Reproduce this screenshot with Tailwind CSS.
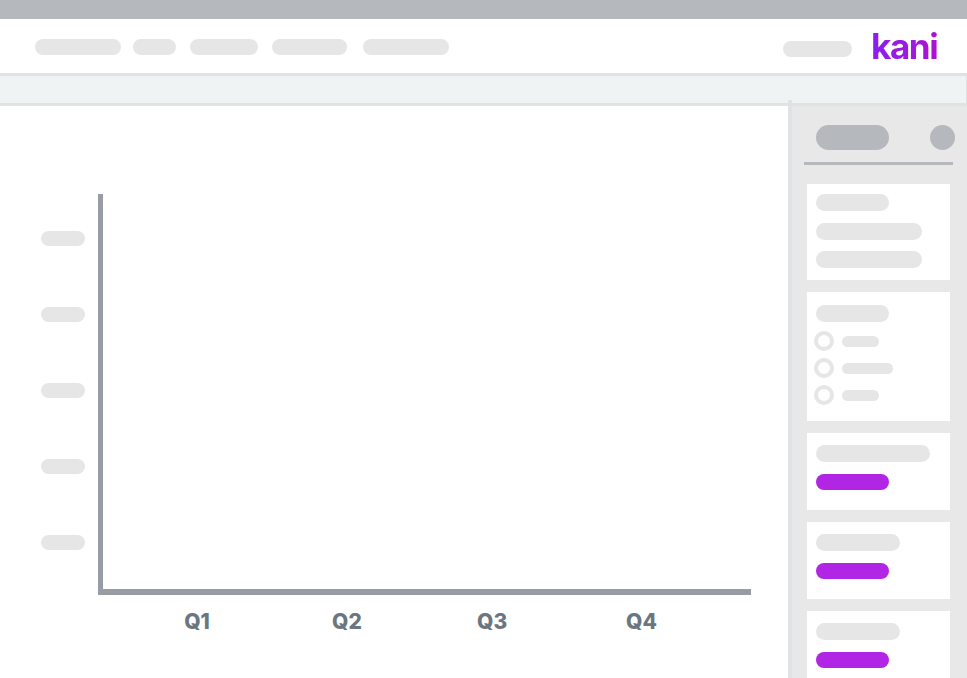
<!DOCTYPE html>
<html lang="en">
<head>
    <meta charset="UTF-8">
    <meta name="viewport" content="width=device-width, initial-scale=1.0">
    <title>Kani report placeholder</title>
    <script src="https://cdn.jsdelivr.net/npm/@tailwindcss/browser@4"></script>
</head>
<body class="bg-white">
<div class="relative flex flex-col w-[967px] h-[678px] overflow-hidden font-['Inter',sans-serif]">

    <!-- Window bar -->
    <div class="h-[19px] shrink-0 bg-[#b5b8bd]"></div>

    <!-- Nav -->
    <div class="h-[54px] shrink-0 flex items-center pl-[35px] pr-[29px] bg-white">
        <div class="flex gap-[14px] mt-[2px]">
            <div class="w-[86px] h-4 rounded-full bg-[#e6e6e6]"></div>
            <div class="w-[43px] h-4 rounded-full bg-[#e6e6e6] -ml-[2px]"></div>
            <div class="w-[68px] h-4 rounded-full bg-[#e6e6e6]"></div>
            <div class="w-[75px] h-4 rounded-full bg-[#e6e6e6]"></div>
            <div class="w-[86px] h-4 rounded-full bg-[#e6e6e6] ml-[2px]"></div>
        </div>
        <div class="ml-auto w-[69px] h-4 rounded-full bg-[#e6e6e6] mt-[6px]"></div>
        <div class="ml-[19px] w-[67px] text-[35px] leading-[36px] font-bold tracking-[-1.4px] bg-gradient-to-r from-[#8a1df2] to-[#ad0fd0] bg-clip-text text-transparent">kani</div>
    </div>

    <!-- Toolbar strip -->
    <div class="h-[33px] shrink-0 bg-[#f0f3f4] border-y-[3px] border-r border-[#dfe3e6]"></div>

    <div class="flex flex-1 min-h-0">
        <!-- Chart -->
        <div class="w-[788px] shrink-0 pt-[88px] pl-[41px]">
            <div class="flex">
                <div class="w-[44px] flex flex-col gap-[61px] pt-[37px]">
                    <div class="h-[15px] rounded-full bg-[#e6e6e6]"></div>
                    <div class="h-[15px] rounded-full bg-[#e6e6e6]"></div>
                    <div class="h-[15px] rounded-full bg-[#e6e6e6]"></div>
                    <div class="h-[15px] rounded-full bg-[#e6e6e6]"></div>
                    <div class="h-[15px] rounded-full bg-[#e6e6e6]"></div>
                </div>
                <div class="ml-[13px] w-[653px] h-[401px] border-l-[5px] border-b-[6px] border-[#989da5]"></div>
            </div>
            <div class="flex mt-[14px] text-[21px] leading-[26px] font-extrabold text-[#6b7680] text-center">
                <span class="w-[30px] ml-[141px]">Q1</span>
                <span class="w-[30px] ml-[120px]">Q2</span>
                <span class="w-[30px] ml-[115px]">Q3</span>
                <span class="w-[30px] ml-[119px]">Q4</span>
            </div>
        </div>

        <!-- Sidebar -->
        <div class="relative flex-1 min-w-0 bg-[#e8e8e8] border-l-4 border-[#dfe3e6]">
            <div class="absolute -left-1 -top-[6px] w-1 h-[6px] bg-[#dfe3e6]"></div>

            <div class="flex items-center justify-between pl-6 pr-3 pt-[19px]">
                <div class="w-[73px] h-[25px] rounded-full bg-[#b5b8bd]"></div>
                <div class="w-[25px] h-[25px] rounded-full bg-[#b5b8bd]"></div>
            </div>
            <div class="ml-3 mr-[14px] mt-3 h-[3px] bg-[#b5b8bd]"></div>

            <div class="flex flex-col gap-3 mt-[19px] ml-[15px] mr-[17px]">
                <div class="h-[96px] bg-white px-[9px] pt-[10px]">
                    <div class="w-[73px] h-[17px] rounded-full bg-[#e6e6e6]"></div>
                    <div class="w-[106px] h-[17px] mt-3 rounded-full bg-[#e6e6e6]"></div>
                    <div class="w-[106px] h-[17px] mt-[11px] rounded-full bg-[#e6e6e6]"></div>
                </div>

                <div class="h-[129px] bg-white px-[9px] pt-[13px]">
                    <div class="w-[73px] h-[17px] rounded-full bg-[#e6e6e6]"></div>
                    <div class="flex flex-col gap-[7px] mt-[9px] -ml-[2px]">
                        <div class="flex items-center gap-2">
                            <div class="w-5 h-5 rounded-full border-4 border-[#e6e6e6]"></div>
                            <div class="w-[37px] h-[11px] rounded-full bg-[#e6e6e6]"></div>
                        </div>
                        <div class="flex items-center gap-2">
                            <div class="w-5 h-5 rounded-full border-4 border-[#e6e6e6]"></div>
                            <div class="w-[51px] h-[11px] rounded-full bg-[#e6e6e6]"></div>
                        </div>
                        <div class="flex items-center gap-2">
                            <div class="w-5 h-5 rounded-full border-4 border-[#e6e6e6]"></div>
                            <div class="w-[37px] h-[11px] rounded-full bg-[#e6e6e6]"></div>
                        </div>
                    </div>
                </div>

                <div class="h-[77px] bg-white px-[9px] pt-3">
                    <div class="w-[114px] h-[17px] rounded-full bg-[#e6e6e6]"></div>
                    <div class="w-[73px] h-4 mt-3 rounded-full bg-[#b026e4]"></div>
                </div>

                <div class="h-[77px] bg-white px-[9px] pt-3">
                    <div class="w-[84px] h-[17px] rounded-full bg-[#e6e6e6]"></div>
                    <div class="w-[73px] h-4 mt-3 rounded-full bg-[#b026e4]"></div>
                </div>

                <div class="h-[77px] bg-white px-[9px] pt-3">
                    <div class="w-[84px] h-[17px] rounded-full bg-[#e6e6e6]"></div>
                    <div class="w-[73px] h-4 mt-3 rounded-full bg-[#b026e4]"></div>
                </div>
            </div>
        </div>
    </div>
</div>
</body>
</html>
